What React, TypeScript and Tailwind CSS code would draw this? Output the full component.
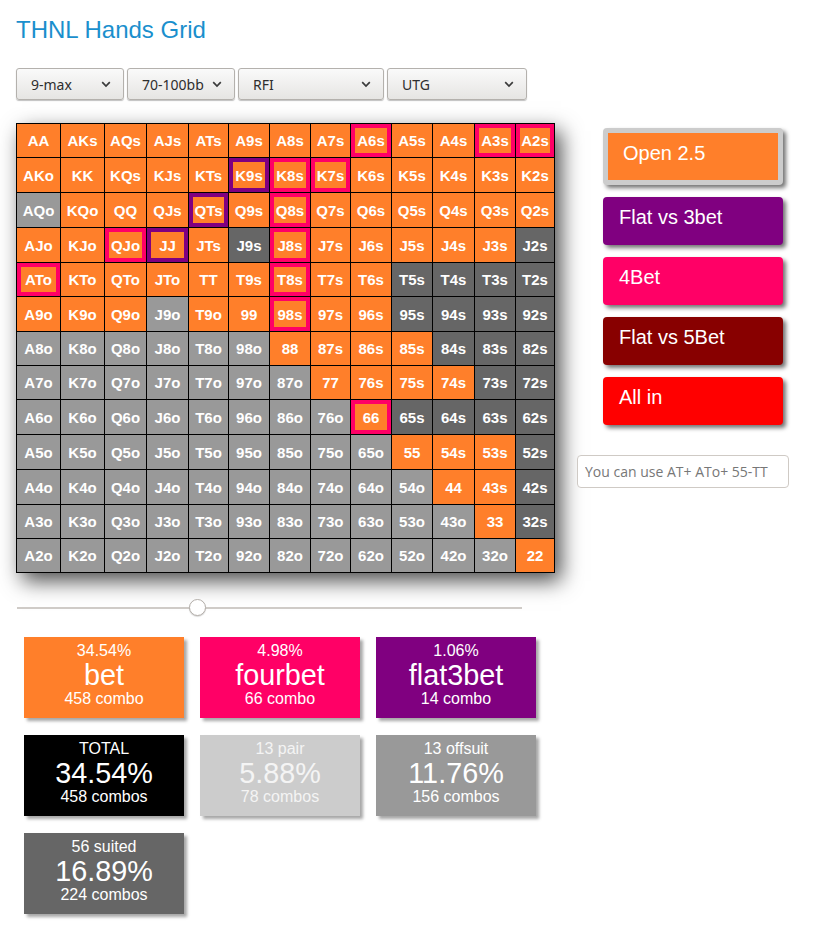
import React from "react";

const RANKS = "AKQJT98765432".split("");

const BET = new Set(
  (
    "AKs AQs AJs ATs A9s A8s A7s A6s A5s A4s A3s A2s " +
    "KQs KJs KTs K9s K8s K7s K6s K5s K4s K3s K2s " +
    "QJs QTs Q9s Q8s Q7s Q6s Q5s Q4s Q3s Q2s " +
    "JTs J8s J7s J6s J5s J4s J3s " +
    "T9s T8s T7s T6s 98s 97s 96s 87s 86s 85s 76s 75s 74s 54s 53s 43s " +
    "AKo KQo AJo KJo QJo ATo KTo QTo JTo A9o K9o Q9o T9o " +
    "AA KK QQ JJ TT 99 88 77 66 55 44 33 22"
  ).split(" ")
);
const PINK = new Set("A6s A3s A2s K8s K7s Q8s J8s T8s 98s QJo ATo 66".split(" "));
const PURPLE = new Set("K9s QTs JJ".split(" "));

function handName(i: number, j: number) {
  if (i === j) return RANKS[i] + RANKS[j];
  if (j > i) return RANKS[i] + RANKS[j] + "s";
  return RANKS[j] + RANKS[i] + "o";
}

function cellClass(i: number, j: number, h: string) {
  let bg = "bg-[#999999]";
  if (i === j) bg = "bg-[#cccccc]";
  else if (j > i) bg = "bg-[#666666]";
  if (BET.has(h)) bg = "bg-[#ff7f2a]";
  let ring = "";
  if (PINK.has(h)) ring = "shadow-[inset_0_0_0_4px_#ff0066]";
  if (PURPLE.has(h)) ring = "shadow-[inset_0_0_0_4px_#800080]";
  return `${bg} ${ring} flex items-center justify-center text-white font-bold text-[15px] leading-none`;
}

function Chevron() {
  return (
    <svg width="10" height="7" viewBox="0 0 10 7" className="shrink-0">
      <polyline points="1.2,1.2 5,5 8.8,1.2" fill="none" stroke="#3a3a3a" strokeWidth="1.7" />
    </svg>
  );
}

function Select({ label, w }: { label: string; w: string }) {
  return (
    <div
      className={`${w} h-[32px] flex items-center justify-between pl-[14px] pr-[12px] rounded-[3px] border border-[#b4b1ad] bg-gradient-to-b from-[#fafafa] to-[#e6e5e3] shadow-[0_1px_1px_rgba(0,0,0,0.25)] text-[14px] text-[#2e2e2e] font-['Noto_Sans',sans-serif]`}
    >
      <span>{label}</span>
      <Chevron />
    </div>
  );
}

function Stat({
  bg,
  top,
  mid,
  bottom,
  text = "text-white",
}: {
  bg: string;
  top: string;
  mid: string;
  bottom: string;
  text?: string;
}) {
  return (
    <div
      className={`${bg} ${text} w-[160px] h-[81px] pt-[5px] flex flex-col items-center shadow-[3px_3px_3px_rgba(0,0,0,0.35)]`}
    >
      <div className="text-[16px] leading-[18px]">{top}</div>
      <div className="text-[28.8px] leading-[30px]">{mid}</div>
      <div className="text-[16px] leading-[18px]">{bottom}</div>
    </div>
  );
}

export default function App() {
  const cells: React.ReactNode[] = [];
  for (let i = 0; i < 13; i++) {
    for (let j = 0; j < 13; j++) {
      const h = handName(i, j);
      cells.push(
        <div key={h} className={cellClass(i, j, h)}>
          {h}
        </div>
      );
    }
  }

  return (
    <div className="min-h-screen w-[835px] bg-white pl-4 pt-[16px] font-['Liberation_Sans',Arial,sans-serif]">
      <h1 className="text-[24px] leading-[28px] text-[#1a8fcd] font-normal">THNL Hands Grid</h1>

      <div className="mt-[24px] flex gap-[3px]">
        <Select label="9-max" w="w-[108px]" />
        <Select label="70-100bb" w="w-[108px]" />
        <Select label="RFI" w="w-[146px]" />
        <Select label="UTG" w="w-[140px]" />
      </div>

      <div className="mt-[23px] flex items-start">
        <div className="w-[539px] shrink-0">
          <div className="grid grid-cols-[43px_43px_41px_41px_39px_40px_40px_39px_40px_40px_41px_40px_38px] grid-rows-[33px_34px_34px_34px_33px_34px_33px_33px_34px_34px_34px_33px_33px] gap-px p-px bg-black w-[539px] shadow-[6px_8px_20px_rgba(0,0,0,0.7)]">
            {cells}
          </div>

          <div className="mt-[26px] ml-[1px] w-[505px] h-[18px] relative">
            <div className="absolute left-0 right-0 top-[8px] h-[2px] bg-[#cfcbc7]" />
            <div className="absolute left-[172px] top-0 w-[17px] h-[17px] rounded-full bg-white border border-[#b3aea9] shadow-[0_1px_1px_rgba(0,0,0,0.15)]" />
          </div>

          <div className="mt-[20px] ml-[8px] flex flex-wrap gap-x-[16px] gap-y-[17px] w-[520px]">
            <Stat bg="bg-[#ff7f2a]" top="34.54%" mid="bet" bottom="458 combo" />
            <Stat bg="bg-[#ff0066]" top="4.98%" mid="fourbet" bottom="66 combo" />
            <Stat bg="bg-[#800080]" top="1.06%" mid="flat3bet" bottom="14 combo" />
            <Stat bg="bg-black" top="TOTAL" mid="34.54%" bottom="458 combos" />
            <Stat bg="bg-[#cccccc]" text="text-[#f4f4f4]" top="13 pair" mid="5.88%" bottom="78 combos" />
            <Stat bg="bg-[#999999]" top="13 offsuit" mid="11.76%" bottom="156 combos" />
            <Stat bg="bg-[#666666]" top="56 suited" mid="16.89%" bottom="224 combos" />
          </div>
        </div>

        <div className="ml-[22px] w-[212px]">
          <div className="pt-[5px] pl-[26px] flex flex-col gap-[12px]">
            <div className="w-[180px] border-[5px] border-[#cccccc] bg-[#ff7f2a] rounded-[4px] pl-[15px] pt-[8px] pb-[15px] leading-[24px] text-[20px] text-white shadow-[3px_3px_4px_rgba(0,0,0,0.55)]">
              Open 2.5
            </div>
            <div className="w-[180px] bg-[#800080] rounded-[4px] pl-[16px] pt-[8px] pb-[16px] leading-[24px] text-[20px] text-white shadow-[3px_3px_4px_rgba(0,0,0,0.55)]">
              Flat vs 3bet
            </div>
            <div className="w-[180px] bg-[#ff0066] rounded-[4px] pl-[16px] pt-[8px] pb-[16px] leading-[24px] text-[20px] text-white shadow-[3px_3px_4px_rgba(0,0,0,0.55)]">
              4Bet
            </div>
            <div className="w-[180px] bg-[#880000] rounded-[4px] pl-[16px] pt-[8px] pb-[16px] leading-[24px] text-[20px] text-white shadow-[3px_3px_4px_rgba(0,0,0,0.55)]">
              Flat vs 5Bet
            </div>
            <div className="w-[180px] bg-[#ff0000] rounded-[4px] pl-[16px] pt-[8px] pb-[16px] leading-[24px] text-[20px] text-white shadow-[3px_3px_4px_rgba(0,0,0,0.55)]">
              All in
            </div>
          </div>

          <input
            type="text"
            placeholder="You can use AT+ ATo+ 55-TT"
            className="mt-[30px] w-[212px] h-[33px] rounded-[4px] border border-[#cfcac5] bg-white px-[7px] text-[14px] font-['Open_Sans',sans-serif] placeholder:text-[#777777] outline-none"
          />
        </div>
      </div>
    </div>
  );
}
